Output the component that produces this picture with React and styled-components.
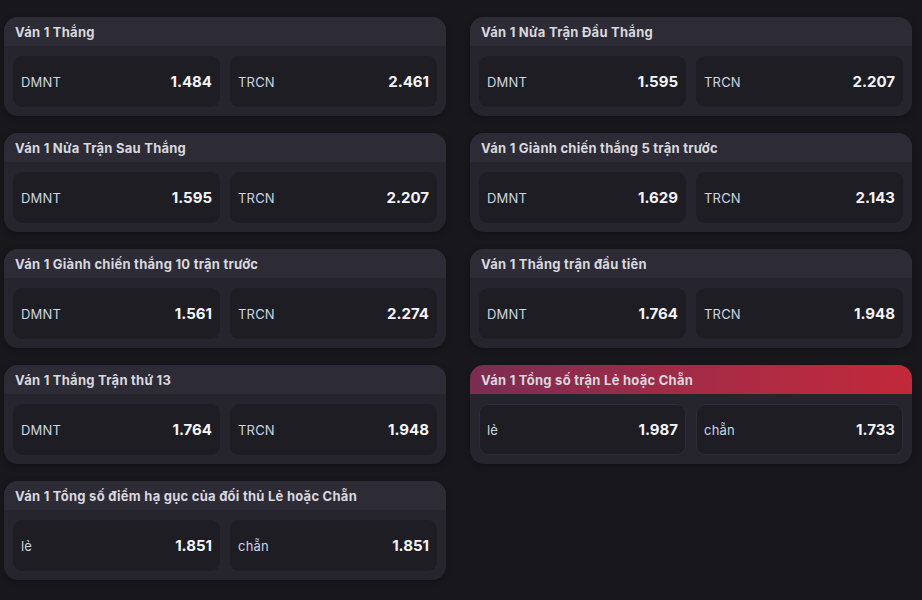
import React from 'react';
import styled, { createGlobalStyle } from 'styled-components';

const GlobalStyle = createGlobalStyle`
  html, body {
    margin: 0;
    padding: 0;
    background: #18171c;
  }
  body {
    font-family: Inter, "Noto Sans", sans-serif;
  }
`;

// danh sách kèo của ván 1
const markets = [
  { title: 'Ván 1 Thắng', odds: [['DMNT', '1.484'], ['TRCN', '2.461']] },
  { title: 'Ván 1 Nửa Trận Đầu Thắng', odds: [['DMNT', '1.595'], ['TRCN', '2.207']] },
  { title: 'Ván 1 Nửa Trận Sau Thắng', odds: [['DMNT', '1.595'], ['TRCN', '2.207']] },
  { title: 'Ván 1 Giành chiến thắng 5 trận trước', odds: [['DMNT', '1.629'], ['TRCN', '2.143']] },
  { title: 'Ván 1 Giành chiến thắng 10 trận trước', odds: [['DMNT', '1.561'], ['TRCN', '2.274']] },
  { title: 'Ván 1 Thắng trận đầu tiên', odds: [['DMNT', '1.764'], ['TRCN', '1.948']] },
  { title: 'Ván 1 Thắng Trận thứ 13', odds: [['DMNT', '1.764'], ['TRCN', '1.948']] },
  { title: 'Ván 1 Tổng số trận Lẻ hoặc Chẵn', odds: [['lẻ', '1.987'], ['chẵn', '1.733']], active: true },
  { title: 'Ván 1 Tổng số điểm hạ gục của đối thủ Lẻ hoặc Chẵn', odds: [['lẻ', '1.851'], ['chẵn', '1.851']] },
];

const App = () => {
  return (
    <Page>
      <GlobalStyle />
      <Grid>
        {markets.map((m) => (
          <Card key={m.title}>
            <Header $active={m.active}>{m.title}</Header>
            <Body>
              {m.odds.map(([label, value]) => (
                <Cell key={label} $active={m.active}>
                  <Label>{label}</Label>
                  <Value>{value}</Value>
                </Cell>
              ))}
            </Body>
          </Card>
        ))}
      </Grid>
    </Page>
  );
};

const Page = styled.div`
  width: 922px;
  height: 600px;
  box-sizing: border-box;
  padding: 17px 10px 0 4px;
  background: #18171c;
  overflow: hidden;
`;

const Grid = styled.div`
  display: grid;
  grid-template-columns: 442px 442px;
  column-gap: 24px;
  row-gap: 17px;
  align-items: start;
`;

const Card = styled.div`
  border-radius: 14px;
  overflow: hidden;
  background: #26252e;
  box-shadow: 0 2px 6px rgba(0, 0, 0, 0.25);
`;

const Header = styled.div`
  height: 29px;
  box-sizing: border-box;
  padding: 0 11px;
  display: flex;
  align-items: center;
  font-size: 13px;
  font-weight: 700;
  letter-spacing: 0.25px;
  color: #d9d8de;
  background: ${(p) =>
    p.$active ? 'linear-gradient(90deg, #7a2c52 0%, #a82b45 55%, #c2293a 100%)' : '#2d2b36'};
`;

const Body = styled.div`
  display: grid;
  grid-template-columns: 1fr 1fr;
  gap: 10px;
  padding: 10px 9px 9px 9px;
`;

const Cell = styled.div`
  height: 51px;
  box-sizing: border-box;
  padding: 0 8px;
  border-radius: 9px;
  background: #1e1d24;
  box-shadow: ${(p) => (p.$active ? 'inset 0 0 0 1px #2e2d36' : 'none')};
  display: flex;
  align-items: center;
  justify-content: space-between;
`;

const Label = styled.span`
  font-size: 13px;
  letter-spacing: 0.2px;
  color: #cdd6e2;
`;

const Value = styled.span`
  font-size: 15px;
  font-weight: 700;
  color: #f4f4f6;
`;

export default App;
